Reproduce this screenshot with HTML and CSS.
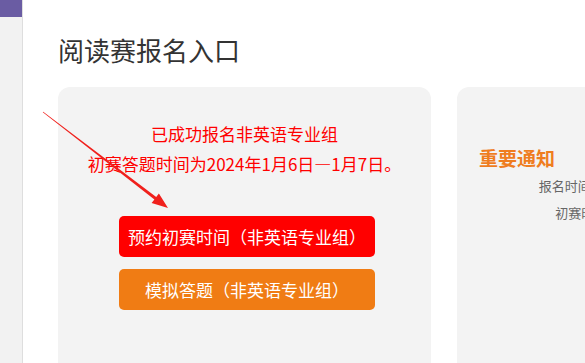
FILE: index.html
```html
<!DOCTYPE html>
<html lang="zh-CN">
<head>
<meta charset="utf-8">
<title>阅读赛报名入口</title>
<link rel="stylesheet" href="styles.css">
</head>
<body>
<div class="page">
  <aside class="sidebar"><div class="brand"></div></aside>
  <main class="main">
    <h1 class="title">阅读赛报名入口</h1>
    <div class="cards">
      <section class="card card-signup">
        <p class="msg">已成功报名非英语专业组<br>初赛答题时间为2024年1月6日—1月7日。</p>
        <div class="actions">
          <a class="btn btn-red">预约初赛时间（非英语专业组）</a>
          <a class="btn btn-orange">模拟答题（非英语专业组）</a>
        </div>
      </section>
      <section class="card card-notice">
        <h2 class="notice-title">重要通知</h2>
        <p class="notice-line">报名时间：即日起—2023年12月31日</p>
        <p class="notice-line">初赛时间：2024年1月6日—7日</p>
      </section>
    </div>
  </main>
  <svg class="arrow" width="585" height="363" viewBox="0 0 585 363">
    <polygon points="42.8,112.2 154.4,199.5 151.6,203.1 168,208 158.9,193.5 156.2,197.1 43.2,111.8" fill="#f0201c"/>
  </svg>
</div>
</body>
</html>
```

FILE: styles.css
```css
html, body {
  margin: 0;
  height: 100%;
  overflow: hidden;
  background: #fff;
  font-family: "Noto Sans CJK SC", "Microsoft YaHei", sans-serif;
}

.page {
  position: relative;
  display: flex;
  height: 363px;
}

.sidebar {
  width: 22px;
  flex: none;
  background: #f2f2f2;
  border-right: 1px solid #dedede;
}

.brand {
  height: 17px;
  background: #6a5ca3;
}

.main {
  flex: 1;
  min-width: 0;
  padding-left: 35px;
  overflow: hidden;
}

.title {
  margin: 35px 0 22px;
  font-size: 26px;
  line-height: 30px;
  font-weight: normal;
  color: #333;
}

.cards {
  display: flex;
  gap: 26px;
}

.card {
  flex: none;
  width: 373px;
  height: 300px;
  box-sizing: border-box;
  background: #f3f3f3;
  border-radius: 12px;
}

.card-signup {
  padding-top: 32px;
}

.msg {
  margin: 0;
  font-size: 17px;
  line-height: 30px;
  color: #f00;
  text-align: center;
}

.actions {
  margin-top: 37px;
  padding-left: 61px;
  display: flex;
  flex-direction: column;
  align-items: flex-start;
  gap: 12px;
}

.btn {
  width: 256px;
  height: 41px;
  border-radius: 5px;
  color: #fff;
  font-size: 17px;
  display: flex;
  align-items: center;
  justify-content: center;
  text-decoration: none;
}

.btn-red {
  background: #ff0000;
}

.btn-orange {
  background: #f07c14;
}

.card-notice {
  padding-top: 59px;
}

.notice-title {
  margin: 0;
  padding-left: 22px;
  font-size: 19px;
  line-height: 24px;
  font-weight: bold;
  color: #ef7d1f;
}

.notice-line {
  margin: 4px 0 0;
  padding-left: 4px;
  font-size: 13px;
  line-height: 23px;
  color: #666;
  text-align: center;
  white-space: nowrap;
}

.arrow {
  position: absolute;
  top: 0;
  left: 0;
  pointer-events: none;
}
```
